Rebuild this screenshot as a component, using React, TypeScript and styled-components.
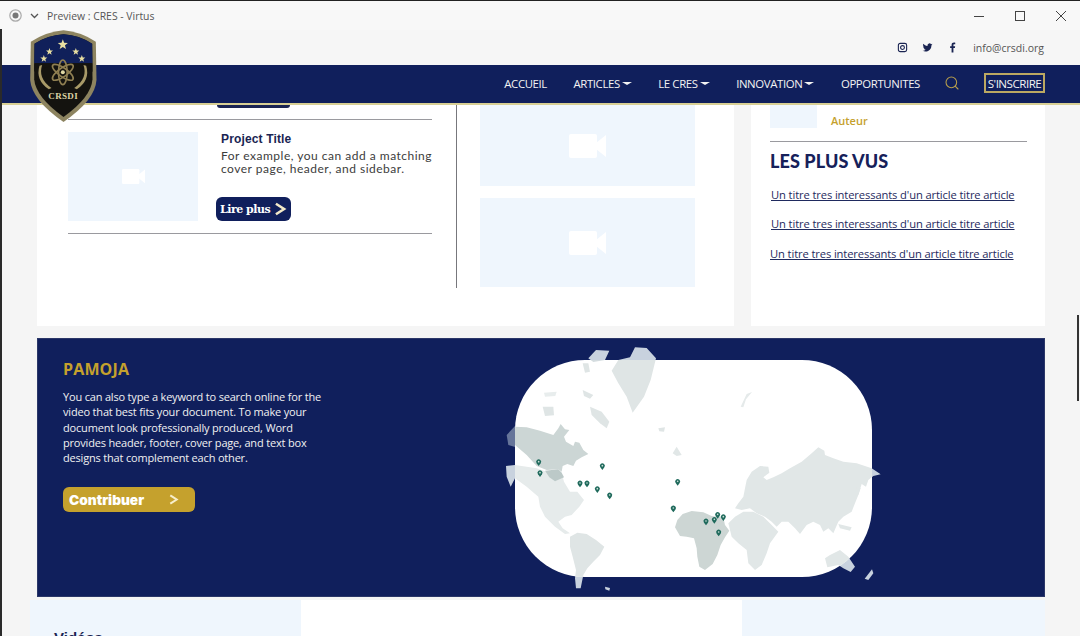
import React from "react";
import styled, { createGlobalStyle } from "styled-components";
import { Search } from "lucide-react";

const navy = "#101f5c";
const gold = "#c5a12d";
const pale = "#eff6fd";

const GlobalStyle = createGlobalStyle`
  html, body {
    margin: 0;
    padding: 0;
    background: #f5f5f5;
    overflow: hidden;
  }
  * {
    box-sizing: border-box;
  }
`;

const Shell = styled.div`
  position: relative;
  width: 1080px;
  height: 636px;
  overflow: hidden;
  display: flex;
  flex-direction: column;
  background: #f5f5f5;
  border-top: 1px solid #222;
  font-family: "Open Sans", "Liberation Sans", sans-serif;
`;

const EdgeLine = styled.div`
  position: absolute;
  left: 0;
  top: 28px;
  bottom: 0;
  width: 2px;
  background: #2a2a2a;
  z-index: 3;
`;

const ScrollThumb = styled.div`
  position: absolute;
  right: 1px;
  top: 314px;
  width: 2px;
  height: 86px;
  background: #333;
`;

const TitleBar = styled.div`
  height: 29px;
  flex: none;
  display: flex;
  align-items: center;
  padding: 0 13px 0 9px;
  background: #f8f8f8;
`;

const WindowTitle = styled.span`
  margin-left: 8px;
  font-size: 10.4px;
  color: #555;
`;

const WindowControls = styled.div`
  margin-left: auto;
  display: flex;
  align-items: center;
  gap: 29px;
`;

const UtilityBar = styled.div`
  height: 35px;
  flex: none;
  display: flex;
  align-items: center;
  justify-content: flex-end;
  gap: 14px;
  padding: 0 36px 0 0;
  background: #f6f6f6;
`;

const SocialIcon = styled.svg`
  width: 11px;
  height: 11px;
  color: #1a2452;
`;

const Mail = styled.span`
  margin-left: 1px;
  font-size: 10.5px;
  color: #555;
`;

const NavBar = styled.nav`
  height: 40px;
  flex: none;
  display: flex;
  align-items: center;
  justify-content: flex-end;
  gap: 26.5px;
  padding: 0 35px 2px 0;
  background: ${navy};
  border-bottom: 2px solid #d8cf94;
  position: relative;
  z-index: 1;
`;

const NavItem = styled.a`
  display: flex;
  align-items: center;
  gap: 2px;
  font-size: 11.4px;
  letter-spacing: -0.38px;
  color: #f3f3f3;
  white-space: nowrap;
`;

const Caret = styled.span`
  width: 0;
  height: 0;
  border-left: 5px solid transparent;
  border-right: 5px solid transparent;
  border-top: 3px solid #f3f3f3;
`;

const SearchIcon = styled(Search)`
  margin: 0 -2px 0 -3px;
  color: #b79e4c;
`;

const SignUp = styled.a`
  width: 61px;
  height: 20px;
  display: flex;
  align-items: center;
  justify-content: center;
  border: 2px solid #bba862;
  font-size: 11.6px;
  letter-spacing: -0.5px;
  color: #f3f3f3;
  white-space: nowrap;
`;

const LogoMark = styled.svg`
  position: absolute;
  left: 30px;
  top: 29px;
  width: 67px;
  height: 92px;
  z-index: 2;
`;

const Content = styled.main`
  flex: 1;
  min-height: 0;
  padding: 0 35px 0 37px;
`;

const TopGrid = styled.div`
  display: grid;
  grid-template-columns: 697px 294px;
  gap: 17px;
  height: 221px;
`;

const Card = styled.section`
  background: #fff;
  overflow: hidden;
`;

const ProjectsCard = styled(Card)`
  display: flex;
  align-items: flex-start;
`;

const ProjectList = styled.div`
  width: 364px;
  margin-left: 31px;
  flex: none;
`;

const CutButton = styled.div`
  width: 73px;
  height: 3px;
  margin-left: 149px;
  background: #1a2452;
  border-radius: 0 0 6px 6px;
`;

const Rule = styled.hr<{ $top: number }>`
  margin: ${(p) => p.$top}px 0 0;
  border: 0;
  border-top: 1px solid #9a9a9f;
`;

const ProjectRow = styled.article`
  display: flex;
  padding-top: 12px;
`;

const Thumb = styled.div<{ $w?: number; $h: number }>`
  width: ${(p) => (p.$w ? `${p.$w}px` : "100%")};
  height: ${(p) => p.$h}px;
  flex: none;
  display: flex;
  align-items: center;
  justify-content: center;
  background: ${pale};
`;

const ProjectText = styled.div`
  margin-left: 23px;
  flex: 1;
  display: flex;
  flex-direction: column;
  align-items: flex-start;
`;

const ProjectTitle = styled.h3`
  margin: 0;
  font: bold 12px/14px "Liberation Sans", sans-serif;
  letter-spacing: 0.15px;
  color: #1a2452;
`;

const ProjectBody = styled.p`
  margin: 3px 0 0;
  font: 12px/13px "Lato", sans-serif;
  letter-spacing: 0.5px;
  color: #3c3c3c;
  white-space: nowrap;
`;

const ReadMore = styled.a`
  margin: auto 0 0 -5px;
  width: 75px;
  height: 24px;
  display: flex;
  align-items: center;
  gap: 3px;
  padding-left: 4px;
  background: ${navy};
  border-radius: 6px;
  font: bold 11px "DejaVu Serif", serif;
  letter-spacing: -0.5px;
  color: #fff;
  white-space: nowrap;
`;

const Divider = styled.div`
  width: 1px;
  height: 183px;
  margin-left: 24px;
  flex: none;
  background: #77777c;
`;

const VideoColumn = styled.div`
  width: 215px;
  margin-left: 23px;
  flex: none;
  display: flex;
  flex-direction: column;
  gap: 12px;
`;

const SideCard = styled(Card)`
  padding: 0 18px 0 19px;
`;

const AuthorRow = styled.div`
  display: flex;
  align-items: flex-end;
`;

const Author = styled.span`
  margin: 0 0 0 14px;
  font-size: 11px;
  line-height: 15px;
  font-weight: 600;
  color: ${gold};
`;

const SideTitle = styled.h2`
  margin: 9px 0 0;
  font: 900 18px/20px "Lato", sans-serif;
  letter-spacing: 0.1px;
  color: #16215a;
`;

const LinkList = styled.div`
  margin-top: 16px;
  padding-left: 1px;
  display: flex;
  flex-direction: column;
  gap: 12.7px;
`;

const ArticleLink = styled.a`
  font-size: 11.2px;
  line-height: 16.8px;
  letter-spacing: -0.12px;
  color: #1f2a5e;
  text-decoration: underline;
  white-space: nowrap;

  &:last-child {
    margin-left: -1px;
  }
`;

const Banner = styled.section`
  margin-top: 12px;
  height: 259px;
  display: flex;
  background: ${navy};
  border: 1px solid #2b3768;
  overflow: hidden;
`;

const BannerText = styled.div`
  width: 452px;
  flex: none;
  padding: 20px 0 0 25px;
`;

const BannerTitle = styled.h2`
  margin: 0;
  font-size: 16px;
  line-height: 20px;
  font-weight: 700;
  letter-spacing: 0.15px;
  color: ${gold};
`;

const BannerBody = styled.p`
  margin: 10px 0 0;
  font-size: 11px;
  line-height: 15.25px;
  letter-spacing: -0.18px;
  color: #f1f1f1;
  white-space: nowrap;
`;

const Contribute = styled.a`
  margin-top: 22px;
  width: 132px;
  height: 25px;
  display: flex;
  align-items: center;
  justify-content: space-between;
  padding: 0 16px 0 6px;
  background: ${gold};
  border-radius: 6px;
  font: 900 13.7px "Inter", sans-serif;
  color: #fff;
`;

const WorldMap = styled.svg`
  width: 410px;
  height: 257px;
  margin-top: 1px;
  flex: none;
`;

const BottomGrid = styled.div`
  margin: 3px 0 0 -7px;
  height: 40px;
  display: grid;
  grid-template-columns: 271px 441px 303px;
`;

const BottomPale = styled.div`
  background: ${pale};
  padding: 29px 0 0 24px;
`;

const BottomWhite = styled.div`
  background: #fff;
`;

const BottomTitle = styled.h2`
  margin: 0;
  font: bold 15px/18px "Liberation Sans", sans-serif;
  color: #1a2452;
`;

const camera = (w: number) => (
  <svg width={w} height={(w * 24) / 37} viewBox="0 0 37 24" fill="#fff" aria-hidden>
    <rect x="0" y="0" width="28" height="24" rx="2" />
    <path d="M27 9 37 1v22L27 15z" />
  </svg>
);

const Chevron = ({ color, size }: { color: string; size: number }) => (
  <svg width={size} height={size} viewBox="0 0 12 12" fill="none" aria-hidden>
    <path d="M2.5 1.5 9.5 6l-7 4.5" stroke={color} strokeWidth="2.2" />
  </svg>
);

const star = (cx: number, cy: number, r: number) => {
  const pts: string[] = [];
  for (let i = 0; i < 10; i++) {
    const rad = i % 2 ? r * 0.42 : r;
    const a = (Math.PI / 5) * i - Math.PI / 2;
    pts.push(`${cx + rad * Math.cos(a)},${cy + rad * Math.sin(a)}`);
  }
  return <polygon key={`${cx}-${cy}`} points={pts.join(" ")} fill="#e8dfa2" />;
};

const Logo = () => (
  <LogoMark viewBox="90 90 200 276">
    <path d="M190 91Q240 95 287 125L289 240Q285 300 190 366 95 300 90 240L92 125Q140 95 190 91Z" fill="#8d8460" />
    <path d="M190 103Q236 106 276 131L277 238Q273 292 190 351 107 292 102 238L103 131Q144 106 190 103Z" fill="#14130f" />
    <path d="M190 103Q236 106 276 131L277 190H102L103 131Q144 106 190 103Z" fill="#10205a" />
    <path d="M102 190H277L277 215Q190 175 102 215Z" fill="#14130f" />
    {star(188, 134, 16)}
    {star(148, 155, 11)}
    {star(227, 155, 11)}
    {star(131, 176, 11)}
    {star(245, 176, 11)}
    <g fill="none" stroke="#8f7f52" strokeWidth="5">
      <ellipse cx="188" cy="217" rx="37" ry="13" transform="rotate(35 188 217)" />
      <ellipse cx="188" cy="217" rx="37" ry="13" transform="rotate(-35 188 217)" />
      <ellipse cx="188" cy="217" rx="37" ry="13" transform="rotate(90 188 217)" />
    </g>
    <circle cx="188" cy="217" r="6" fill="#e0d8a4" />
    <path d="M126 195Q112 235 154 264L146 268Q105 240 118 197Z" fill="#a89a68" />
    <path d="M250 195Q264 235 222 264L230 268Q271 240 258 197Z" fill="#a89a68" />
    <text x="189" y="297" textAnchor="middle" fontFamily="Liberation Serif, serif" fontWeight="bold" fontSize="27" letterSpacing="1" fill="#ddd5a6">CRSDI</text>
  </LogoMark>
);

const lands: { fill: string; points: string }[] = [
  { fill: "#dfe5e5", points: "365,92 385,60 420,52 435,22 470,24 498,55 482,120 462,170 428,218 410,170 385,130" },
  { fill: "#d4dcdf", points: "295,55 318,30 358,32 345,60 310,66" },
  { fill: "#dfe5e5", points: "278,70 295,70 300,95 285,98" },
  { fill: "#dfe5e5", points: "158,200 190,200 192,226 165,228" },
  { fill: "#dfe5e5", points: "300,200 335,215 358,245 350,265 330,250 305,225" },
  { fill: "#dfe5e5", points: "278,150 310,165 300,176 282,168" },
  { fill: "#e8eded", points: "162,158 200,155 196,168 165,170" },
  { fill: "#dfe5e5", points: "505,265 525,262 522,275 508,274" },
  { fill: "#ccd6d5", points: "75,260 110,262 150,272 190,285 205,265 212,252 225,268 238,270 222,290 228,305 250,318 255,305 268,308 280,330 295,342 275,352 258,362 250,378 232,372 218,378 215,395 205,388 170,390 140,378 110,345 75,315" },
  { fill: "#e6ebeb", points: "48,378 75,375 110,380 140,385 170,395 205,388 215,398 222,425 240,455 262,455 282,480 268,500 245,525 225,530 205,545 218,565 240,580 225,582 195,560 165,530 150,500 145,470 110,440 75,415 62,440 50,410" },
  { fill: "#bcc9c8", points: "165,392 205,388 215,398 222,412 195,424 178,412" },
  { fill: "#dfe5e5", points: "240,590 262,578 290,582 318,600 343,620 330,645 310,665 292,685 280,705 272,745 258,745 255,715 258,690 248,650 240,620" },
  { fill: "#cdd6d4", points: "555,562 562,540 578,522 605,513 640,517 665,528 700,532 705,555 718,572 705,592 692,615 682,645 668,672 645,690 628,680 622,650 620,625 612,595 590,590 570,588" },
  { fill: "#e1e7e7", points: "715,550 735,530 760,515 790,515 820,530 845,555 865,575 840,610 830,640 815,675 795,690 775,670 770,630 745,610 725,590" },
  { fill: "#e1e7e7", points: "735,505 745,490 760,470 765,445 770,420 785,395 810,378 835,380 838,398 820,412 830,420 850,412 875,400 900,385 935,365 965,340 985,322 1003,332 1005,345 1030,355 1060,365 1100,370 1145,385 1172,403 1150,408 1135,420 1128,440 1115,432 1105,465 1095,490 1085,515 1060,530 1045,545 1030,580 1015,565 1000,575 990,555 970,545 950,555 930,582 915,565 895,545 875,545 860,560 845,545 825,530 800,520 780,505 755,510" },
  { fill: "#e1e7e7", points: "1045,552 1085,562 1080,572 1050,565" },
  { fill: "#e1e7e7", points: "1100,440 1112,445 1105,465 1097,460" },
  { fill: "#e1e7e7", points: "1005,655 1020,645 1050,630 1062,640 1075,650 1095,680 1082,696 1060,685 1045,675 1012,682" },
  { fill: "#c6d2dc", points: "1124,716 1146,688 1150,700 1135,720" },
  { fill: "#c6d2dc", points: "345,740 360,744 358,752 346,748" },
  { fill: "#e5eaea", points: "752,200 770,162 786,156 768,178 760,202" },
  { fill: "#e1e7e7", points: "560,320 575,345 560,348 548,340" },
];

const pins: [number, number][] = [
  [146, 368], [150, 401], [337, 380], [270, 432], [291, 432], [322, 449], [359, 468],
  [563, 427], [550, 507], [648, 546], [673, 541], [683, 526], [700, 533], [686, 579],
];

const MapGraphic = () => (
  <WorldMap viewBox="0 0 1230 771">
    <defs>
      <clipPath id="map-card">
        <rect x="75" y="60" width="1071" height="651" rx="210" />
      </clipPath>
    </defs>
    <polygon points="50,285 75,258 78,322 55,315" fill="#66759a" />
    {lands.map((l) => (
      <polygon key={l.points} points={l.points} fill="#c8d2de" />
    ))}
    <rect x="75" y="60" width="1071" height="651" rx="210" fill="#fff" />
    <g clipPath="url(#map-card)">
      {lands.map((l) => (
        <polygon key={l.points} points={l.points} fill={l.fill} />
      ))}
    </g>
    {pins.map(([x, y]) => (
      <g key={`${x}-${y}`}>
        <path d={`M${x} ${y + 10}l-6 -8a7.5 7.5 0 1 1 12 0z`} fill="#1f6a5c" />
        <circle cx={x} cy={y - 3} r="2.5" fill="#cfe0da" />
      </g>
    ))}
  </WorldMap>
);

export default function App() {
  return (
    <Shell>
      <GlobalStyle />
      <EdgeLine />
      <TitleBar>
        <svg width="13" height="13" viewBox="0 0 13 13" aria-hidden>
          <circle cx="6.5" cy="6.5" r="5.7" fill="none" stroke="#aaa" strokeWidth="1.2" />
          <circle cx="6.5" cy="6.5" r="3" fill="#777" />
        </svg>
        <svg style={{ marginLeft: 8 }} width="9" height="6" viewBox="0 0 9 6" fill="none" aria-hidden>
          <path d="M1 1l3.5 3.5L8 1" stroke="#555" strokeWidth="1.3" />
        </svg>
        <WindowTitle>Preview : CRES - Virtus</WindowTitle>
        <WindowControls>
          <svg width="12" height="12" viewBox="0 0 12 12" aria-hidden>
            <path d="M1 6.5h10" stroke="#444" strokeWidth="1" />
          </svg>
          <svg width="12" height="12" viewBox="0 0 12 12" fill="none" aria-hidden>
            <rect x="1.5" y="1.5" width="9" height="9" stroke="#444" strokeWidth="1" />
          </svg>
          <svg width="12" height="12" viewBox="0 0 12 12" fill="none" aria-hidden>
            <path d="M1 1l10 10M11 1L1 11" stroke="#444" strokeWidth="1" />
          </svg>
        </WindowControls>
      </TitleBar>
      <UtilityBar>
        <SocialIcon viewBox="0 0 12 12" fill="none" stroke="currentColor" strokeWidth="1.2">
          <rect x="1.5" y="1.5" width="9" height="9" rx="2" />
          <circle cx="6" cy="6" r="2.1" />
        </SocialIcon>
        <SocialIcon viewBox="0 0 12 12" fill="currentColor">
          <path d="M11.5 2.6c-.4.2-.8.3-1.3.4.5-.3.8-.7 1-1.2-.4.3-.9.4-1.4.5a2.2 2.2 0 0 0-3.8 2C4.100 4.200 2.500 3.300 1.400 2a2.200 2.200 0 0 0 .7 3c-.4 0-.7-.1-1-.3 0 1.100.8 2 1.800 2.200-.3.100-.7.100-1 0 .3.900 1.100 1.500 2.100 1.500A4.500 4.500 0 0 1 .5 9.400 6.300 6.300 0 0 0 10.200 3.800c.5-.3.900-.7 1.300-1.200z" />
        </SocialIcon>
        <SocialIcon viewBox="0 0 12 12" fill="currentColor">
          <path d="M7 11.500V6.500h1.600l.3-2H7V3.400c0-.6.200-1 1-1h1V.7C8.700.6 8.200.6 7.600.6 6.100.6 5 1.500 5 3.200v1.300H3.400v2H5v5z" />
        </SocialIcon>
        <Mail>info@crsdi.org</Mail>
      </UtilityBar>
      <NavBar>
        <NavItem>ACCUEIL</NavItem>
        <NavItem>ARTICLES<Caret /></NavItem>
        <NavItem>LE CRES <Caret /></NavItem>
        <NavItem>INNOVATION<Caret /></NavItem>
        <NavItem>OPPORTUNITES</NavItem>
        <SearchIcon size={16} strokeWidth={1.6} />
        <SignUp>S'INSCRIRE</SignUp>
      </NavBar>
      <Logo />
      <Content>
        <TopGrid>
          <ProjectsCard>
            <ProjectList>
              <CutButton />
              <Rule $top={11} />
              <ProjectRow>
                <Thumb $w={130} $h={89}>{camera(23)}</Thumb>
                <ProjectText>
                  <ProjectTitle>Project Title</ProjectTitle>
                  <ProjectBody>
                    For example, you can add a matching
                    <br />
                    cover page, header, and sidebar.
                  </ProjectBody>
                  <ReadMore>
                    Lire plus
                    <Chevron color="#f3e9c8" size={14} />
                  </ReadMore>
                </ProjectText>
              </ProjectRow>
              <Rule $top={12} />
            </ProjectList>
            <Divider />
            <VideoColumn>
              <Thumb $h={81}>{camera(37)}</Thumb>
              <Thumb $h={89}>{camera(37)}</Thumb>
            </VideoColumn>
          </ProjectsCard>
          <SideCard>
            <AuthorRow>
              <Thumb $w={47} $h={23} />
              <Author>Auteur</Author>
            </AuthorRow>
            <Rule $top={13} />
            <SideTitle>LES PLUS VUS</SideTitle>
            <LinkList>
              <ArticleLink>Un titre tres interessants d'un article titre article</ArticleLink>
              <ArticleLink>Un titre tres interessants d'un article titre article</ArticleLink>
              <ArticleLink>Un titre tres interessants d'un article titre article</ArticleLink>
            </LinkList>
          </SideCard>
        </TopGrid>
        <Banner>
          <BannerText>
            <BannerTitle>PAMOJA</BannerTitle>
            <BannerBody>
              You can also type a keyword to search online for the
              <br />
              video that best fits your document. To make your
              <br />
              document look professionally produced, Word
              <br />
              provides header, footer, cover page, and text box
              <br />
              designs that complement each other.
            </BannerBody>
            <Contribute>
              Contribuer
              <Chevron color="#f7eecb" size={11} />
            </Contribute>
          </BannerText>
          <MapGraphic />
        </Banner>
        <BottomGrid>
          <BottomPale>
            <BottomTitle>Vidéos</BottomTitle>
          </BottomPale>
          <BottomWhite />
          <BottomPale />
        </BottomGrid>
      </Content>
      <ScrollThumb />
    </Shell>
  );
}
